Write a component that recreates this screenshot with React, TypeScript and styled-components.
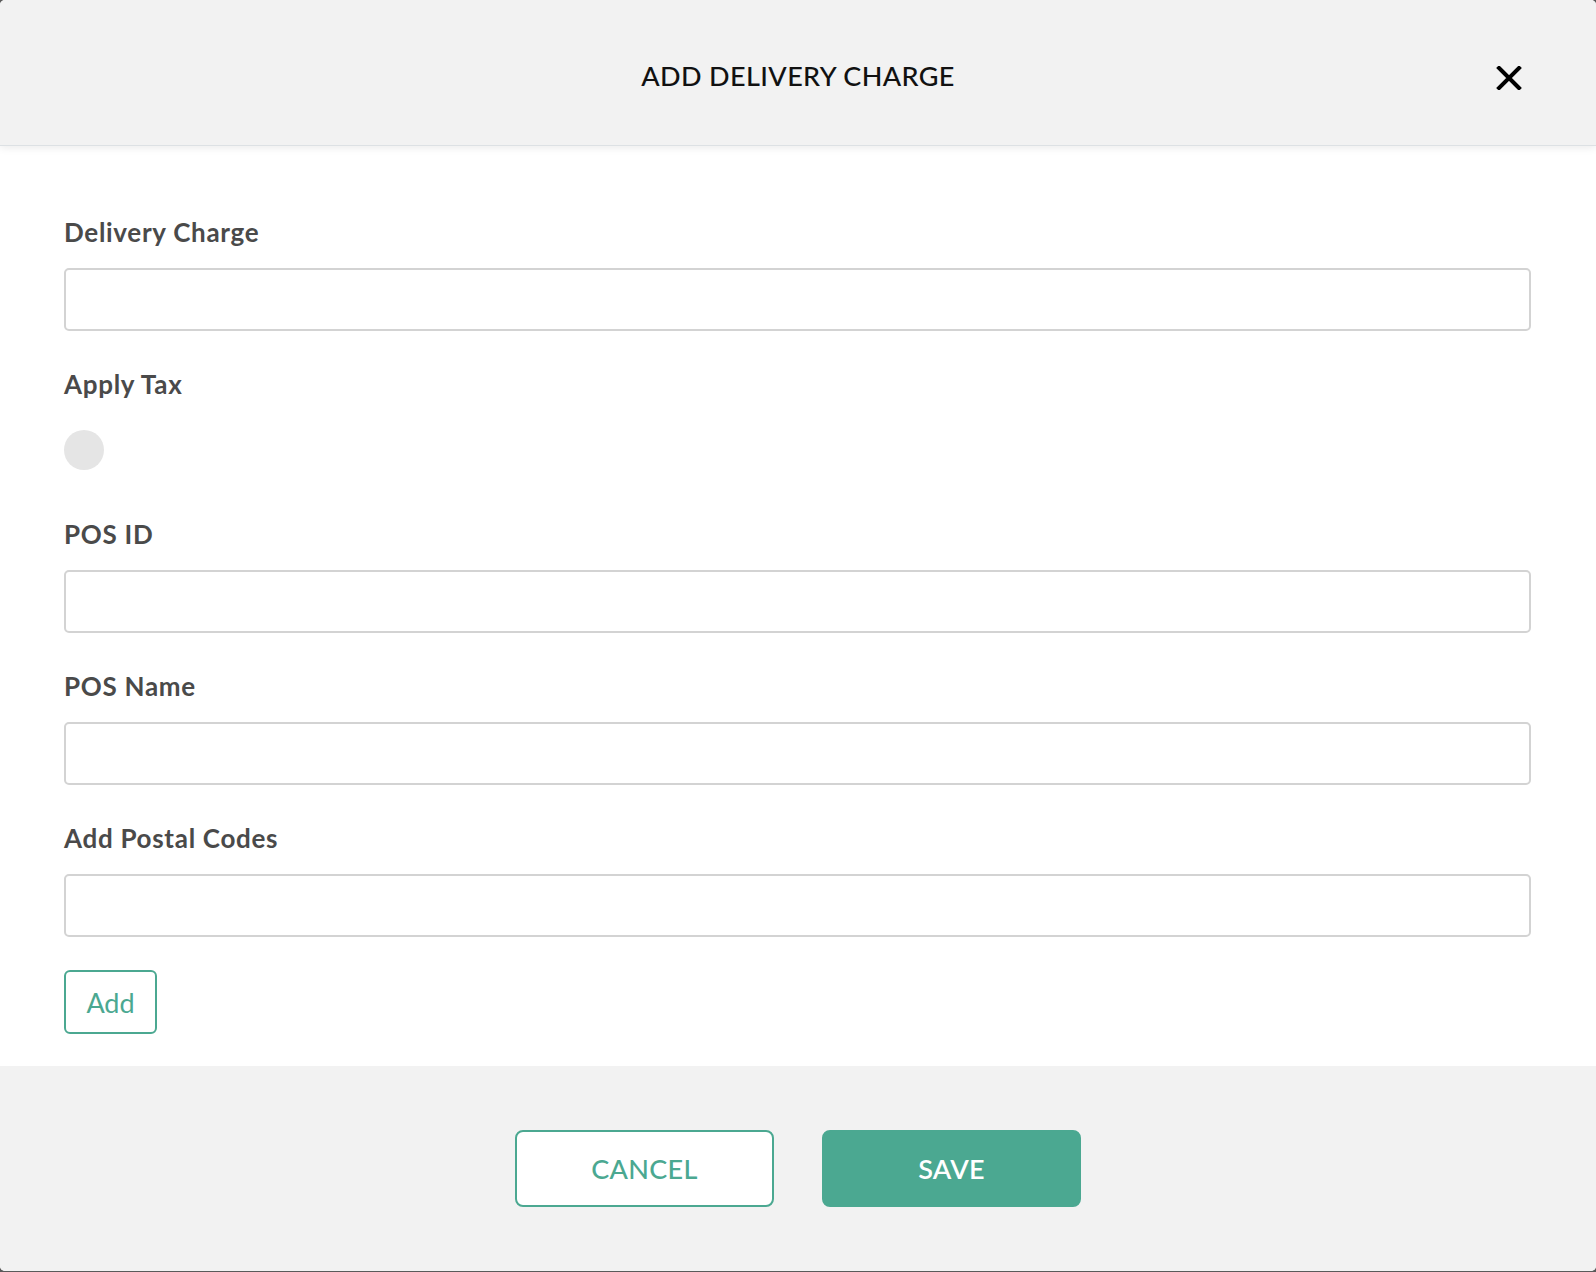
import React from "react";
import styled, { createGlobalStyle } from "styled-components";

const GlobalStyle = createGlobalStyle`
  html, body {
    margin: 0;
    padding: 0;
    background: #5a5a5a;
  }
  * {
    box-sizing: border-box;
  }
`;

const Modal = styled.div`
  display: flex;
  flex-direction: column;
  height: 1271px;
  margin-bottom: 1px;
  background: #ffffff;
  border-radius: 5px;
  overflow: hidden;
  font-family: Lato, "Noto Sans", sans-serif;
`;

const Header = styled.header`
  position: relative;
  z-index: 1;
  display: grid;
  grid-template-columns: 1fr auto 1fr;
  align-items: center;
  height: 145px;
  padding: 5px 74px 0;
  background: #f2f2f2;
  box-shadow: 0 1px 0 #dde1e4, 0 3px 8px rgba(0, 0, 0, 0.08);
`;

const Title = styled.h1`
  grid-column: 2;
  margin: 0;
  font-size: 27px;
  font-weight: 500;
  color: #111111;
  letter-spacing: 0.4px;
`;

const CloseButton = styled.button`
  grid-column: 3;
  justify-self: end;
  display: flex;
  padding: 0;
  margin-top: 6px;
  border: none;
  background: none;
  cursor: pointer;
`;

const Body = styled.div`
  display: flex;
  flex-direction: column;
  padding: 72px 65px 32px 64px;
`;

interface FieldProps {
  gap?: number;
}

const Field = styled.div<FieldProps>`
  display: flex;
  flex-direction: column;
  margin-bottom: ${(props) => props.gap ?? 38}px;
`;

const Label = styled.label<FieldProps>`
  font-size: 26px;
  line-height: 30px;
  font-weight: 700;
  color: #4a4a4a;
  letter-spacing: 0.7px;
  margin-bottom: ${(props) => props.gap ?? 21}px;
`;

const Input = styled.input`
  height: 63px;
  width: 100%;
  border: 2px solid #d3d3d3;
  border-radius: 5px;
  padding: 0 18px;
  font-family: inherit;
  font-size: 22px;
  outline: none;
`;

const Toggle = styled.button`
  width: 40px;
  height: 40px;
  padding: 0;
  border: none;
  border-radius: 50%;
  background: #e5e5e5;
  cursor: pointer;
`;

const AddButton = styled.button`
  align-self: flex-start;
  width: 93px;
  height: 64px;
  border: 2px solid #4ba891;
  border-radius: 6px;
  background: #ffffff;
  color: #4ba891;
  font-family: inherit;
  font-size: 27px;
  font-weight: 400;
  cursor: pointer;
`;

const Footer = styled.footer`
  flex: 1;
  display: flex;
  justify-content: center;
  align-items: center;
  gap: 48px;
  background: #f2f2f2;
`;

interface ActionProps {
  primary?: boolean;
}

const ActionButton = styled.button<ActionProps>`
  width: 259px;
  height: 77px;
  border: 2px solid #4ba891;
  border-radius: 8px;
  background: ${(props) => (props.primary ? "#4ba891" : "#ffffff")};
  color: ${(props) => (props.primary ? "#ffffff" : "#4ba891")};
  font-family: inherit;
  font-size: 27px;
  font-weight: ${(props) => (props.primary ? 600 : 500)};
  letter-spacing: 0.3px;
  cursor: pointer;
`;

const CloseIcon = () => (
  <svg width="26" height="24" viewBox="0 0 26 24">
    <path
      d="M3 2 L23 22 M23 2 L3 22"
      stroke="#000000"
      strokeWidth="4"
      strokeLinecap="square"
      fill="none"
    />
  </svg>
);

const App: React.FC = (): JSX.Element => {
  return (
    <>
      <GlobalStyle />
      <Modal>
        <Header>
          <Title>ADD DELIVERY CHARGE</Title>
          <CloseButton aria-label="Close">
            <CloseIcon />
          </CloseButton>
        </Header>
        <Body>
          <Field>
            <Label>Delivery Charge</Label>
            <Input />
          </Field>
          <Field gap={49}>
            <Label gap={31}>Apply Tax</Label>
            <Toggle aria-label="Apply Tax" />
          </Field>
          <Field>
            <Label>POS ID</Label>
            <Input />
          </Field>
          <Field>
            <Label>POS Name</Label>
            <Input />
          </Field>
          <Field gap={33}>
            <Label>Add Postal Codes</Label>
            <Input />
          </Field>
          <AddButton>Add</AddButton>
        </Body>
        <Footer>
          <ActionButton>CANCEL</ActionButton>
          <ActionButton primary>SAVE</ActionButton>
        </Footer>
      </Modal>
    </>
  );
};

export default App;
